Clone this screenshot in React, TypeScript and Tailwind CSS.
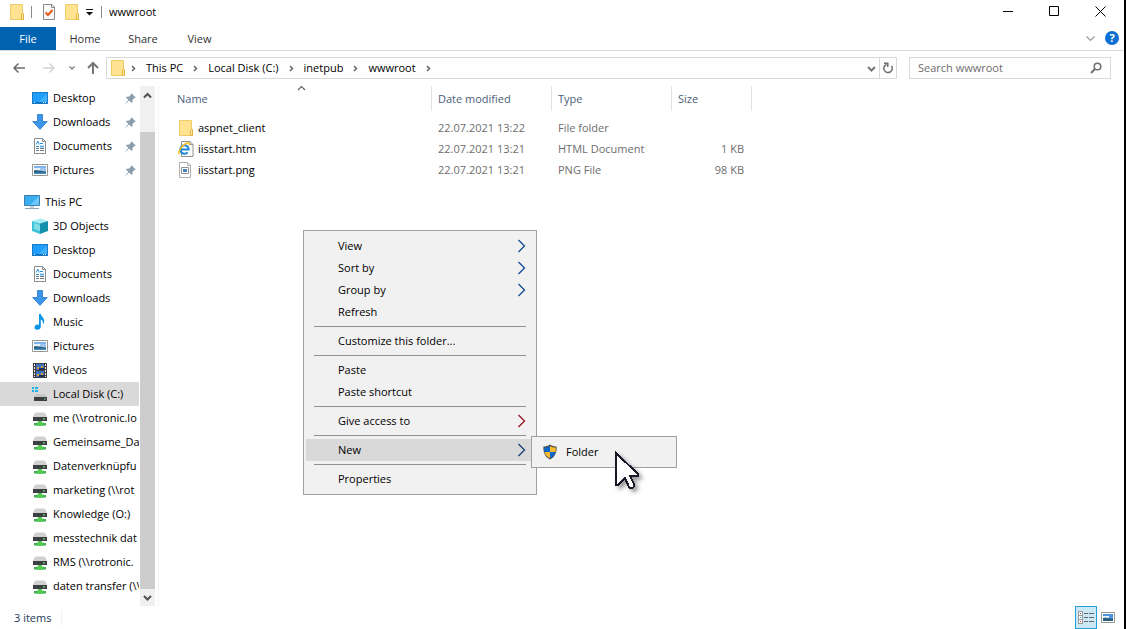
import type { ReactNode } from "react";

type SideItem = { name: string; icon: ReactNode; pinned?: boolean; active?: boolean };
type FileItem = { name: string; date: string; type: string; size: string; icon: ReactNode };
type MenuItem = { label: string; arrow?: string; active?: boolean };

const FolderIcon = () => (
  <svg width="16" height="16" viewBox="0 0 16 16" className="shrink-0">
    <path d="M1.5 0.5h12v11h1v4h-13z" fill="#ffe391" stroke="#eecb66" />
    <path d="M12.500 15.500v-5l1-1h1v6z" fill="#ffe9a8" stroke="#e3b53c" />
  </svg>
);

const DesktopIcon = () => (
  <svg width="16" height="16" viewBox="0 0 16 16" shapeRendering="crispEdges">
    <path d="M0 2h16v12H0z" fill="#1879c4" />
    <path d="M1 3h14v9H1z" fill="#1e9dfb" />
    <path d="M15 3v9H6z" fill="#3eaeff" />
    <path d="M1 12h14v1H1z" fill="#0c6fc0" />
    <path d="M2 12h1v1H2zM11 12h1v1h-1zM13 12h1v1h-1z" fill="#d9efff" />
  </svg>
);

const DownloadsIcon = () => (
  <svg width="16" height="16" viewBox="0 0 16 16">
    <path d="M5.500 0.500h5v7h4.700L8 15.400 0.800 7.500h4.700z" fill="#3d94e4" stroke="#2a7fd0" strokeWidth="0.9" />
  </svg>
);

const DocumentsIcon = () => (
  <svg width="16" height="16" viewBox="0 0 16 16">
    <path d="M2.500 0.500h8l3 3v12h-11z" fill="#fff" stroke="#8b8b8b" />
    <path d="M10.500 0.500v3h3" fill="none" stroke="#8b8b8b" />
    <path d="M4 6.500l2-3.500 1.200 3.500M8 5.500h3M4 8.500h3M8 8.500h4" fill="none" stroke="#2f93dc" />
    <path d="M8 7.500h4v2H8z" fill="#5fb0e8" />
    <path d="M4 10.500h3M8 10.500h4M4 12.500h3M8 12.500h4" fill="none" stroke="#6f7c88" />
  </svg>
);

const PicturesIcon = () => (
  <svg width="16" height="16" viewBox="0 0 16 16">
    <path d="M0.500 2.500h15v11h-15z" fill="#fff" stroke="#979797" />
    <path d="M2 4h12v8H2z" fill="#9fc9f0" />
    <path d="M2 4h12v2H2z" fill="#7db4ea" />
    <path d="M2 6h6v2H2z" fill="#e8f4fb" />
    <path d="M2 8.500c3-1 7 .3 12 1V12H2z" fill="#2d5d7c" />
    <path d="M2 10.500h12V12H2z" fill="#3f8dbd" />
  </svg>
);

const ComputerIcon = () => (
  <svg width="16" height="16" viewBox="0 0 16 16">
    <path d="M0.500 1.500h15v10h-15z" fill="#38adf0" stroke="#3c7fa8" />
    <path d="M15 2v9H6z" fill="#6cc8fa" />
    <path d="M6 12h4v2H6z" fill="#c3d2dc" />
    <path d="M1 14.500h14" stroke="#8fa6b5" />
  </svg>
);

const CubeIcon = () => (
  <svg width="16" height="16" viewBox="0 0 16 16">
    <path d="M0 3l8-2.500L16 3 8 5.500z" fill="#a5eef5" />
    <path d="M0 3l8 2.500V16L0 13z" fill="#3fc2d8" />
    <path d="M16 3L8 5.500V16l8-3z" fill="#1490ab" />
    <path d="M2 5l6 2v6L2 11z" fill="#7fdfe9" />
  </svg>
);

const MusicIcon = () => (
  <svg width="16" height="16" viewBox="0 0 16 16">
    <path d="M7 0h1.800c.2 2.500 4 3.500 3.400 8-.2 1-.8 1.800-1.400 2.200.5-2.700-.5-4-2-4.700V13c0 1.500-1.600 2.700-3.600 2.700S2.500 14.800 2.500 13.300s1.600-2.700 3.200-2.700c.5 0 .9.100 1.300.3z" fill="#0b93e8" />
  </svg>
);

const VideosIcon = () => (
  <svg width="16" height="16" viewBox="0 0 16 16" shapeRendering="crispEdges">
    <path d="M1 1h14v15H1z" fill="#3d3d3d" />
    <path d="M2 2h1v2H2zM2 5h1v2H2zM2 8h1v2H2zM2 11h1v2H2zM2 14h1v1H2zM13 2h1v2h-1zM13 5h1v2h-1zM13 8h1v2h-1zM13 11h1v2h-1zM13 14h1v1h-1z" fill="#eee" />
    <path d="M4 2h8v6H4zM4 9h8v6H4z" fill="#3f74c4" />
    <path d="M5 5h2v2H5zM9 4h2v2H9zM5 12h2v2H5zM9 11h2v2H9z" fill="#d79b2d" />
    <path d="M7 6h5v2H7zM7 13h5v2H7z" fill="#1b2f63" />
  </svg>
);

const DiskIcon = () => (
  <svg width="16" height="16" viewBox="0 0 16 16">
    <path d="M0 1h2v2H0zM3 1h3v2H3zM0 4h2v2H0zM3 4h3v2H3z" fill="#19b5e8" />
    <path d="M4.500 8h8L15 11H2z" fill="#c3c5c7" />
    <path d="M2 11h13v4H2z" fill="#3d4043" />
    <path d="M12 12.500h1.500v1H12z" fill="#7af07a" />
  </svg>
);

const NetDriveIcon = () => (
  <svg width="16" height="16" viewBox="0 0 16 16">
    <path d="M3 2.500h10l2 4.500H1z" fill="#d0d1d3" />
    <path d="M1 7h14v4H1z" fill="#3c3f42" />
    <path d="M11 8.500h2v1h-2z" fill="#86ee86" />
    <path d="M6 11h4v2H6z" fill="#5bc45b" />
    <path d="M2 13h12v2.500H2z" fill="#3fb04a" />
    <path d="M5 12.500h6V16H5z" fill="#55cb57" />
  </svg>
);

const PinIcon = () => (
  <svg width="11" height="11" viewBox="0 0 11 11" className="shrink-0">
    <path d="M6.500 0.300l4.200 4.200-1.200.5-1.800 1.800-.3 2.400-1 .6L4 7.500 0.800 10.500 0.400 10.100 3.400 7 1 4.600l.8-.9 2.400-.3L6 1.500z" fill="#8d9dab" />
  </svg>
);

const HtmIcon = () => (
  <svg width="16" height="16" viewBox="0 0 16 16" className="shrink-0">
    <path d="M3.500 0.500h8.500l3 3v12H3.500z" fill="#fff" stroke="#929292" />
    <path d="M12 0.500v3h3" fill="none" stroke="#929292" />
    <path d="M2.500 8.500h8.200a4.200 4.200 0 1 0-1 2.800" fill="none" stroke="#1a86dc" strokeWidth="2" />
    <path d="M1.500 13.200C-1 10.800 5 3 9.500 2c1.800-.3 2.200.8 1.600 2.200" fill="none" stroke="#f2c11f" strokeWidth="1.500" />
  </svg>
);

const PngIcon = () => (
  <svg width="16" height="16" viewBox="0 0 16 16" className="shrink-0">
    <path d="M1.500 0.500h8.500l2.500 2.500v12.500h-11z" fill="#fff" stroke="#b0b0b0" />
    <path d="M9.500 0.500v3h3" fill="none" stroke="#b0b0b0" />
    <path d="M3.500 5.500h7v6h-7z" fill="#fff" stroke="#8a9299" />
    <path d="M5 7h4v3H5z" fill="#4784bd" />
  </svg>
);

const ShieldIcon = () => (
  <svg width="16" height="16" viewBox="0 0 16 16" className="shrink-0">
    <path d="M8 0.600c2 1.600 4.200 2 6.600 2C15 9 12.500 13.500 8 15.500 3.500 13.500 1 9 1.400 2.600c2.400 0 4.600-.4 6.600-2z" fill="#4b4b4b" />
    <path d="M8 2v6H2.500C2.200 6.700 2.200 5.200 2.300 3.600 4.500 3.500 6.300 3.100 8 2z" fill="#0b67d0" />
    <path d="M8 2v6h5.500c.3-1.300.3-2.800.2-4.400C11.500 3.500 9.700 3.100 8 2z" fill="#fdbb2d" />
    <path d="M8 14.300V8H2.500c.8 3 2.700 5.100 5.500 6.300z" fill="#fdbb2d" />
    <path d="M8 14.300V8h5.500c-.8 3-2.700 5.100-5.500 6.300z" fill="#0b67d0" />
  </svg>
);

const Chevron = ({ dir, className }: { dir: "up" | "down" | "right"; className: string }) => (
  <svg width="9" height="9" viewBox="0 0 9 9" fill="none" stroke="currentColor" strokeWidth="1.200" className={className}>
    {dir === "up" && <path d="M1 6l3.500-3.500L8 6" />}
    {dir === "down" && <path d="M.5 2.500l4 4 4-4" />}
    {dir === "right" && <path d="M3 2l2.500 2.500L3 7" strokeWidth="1.500" />}
  </svg>
);

const quickAccess: SideItem[] = [
  { name: "Desktop", icon: <DesktopIcon />, pinned: true },
  { name: "Downloads", icon: <DownloadsIcon />, pinned: true },
  { name: "Documents", icon: <DocumentsIcon />, pinned: true },
  { name: "Pictures", icon: <PicturesIcon />, pinned: true },
];

const thisPc: SideItem[] = [
  { name: "3D Objects", icon: <CubeIcon /> },
  { name: "Desktop", icon: <DesktopIcon /> },
  { name: "Documents", icon: <DocumentsIcon /> },
  { name: "Downloads", icon: <DownloadsIcon /> },
  { name: "Music", icon: <MusicIcon /> },
  { name: "Pictures", icon: <PicturesIcon /> },
  { name: "Videos", icon: <VideosIcon /> },
  { name: "Local Disk (C:)", icon: <DiskIcon />, active: true },
  { name: "me (\\\\rotronic.lo", icon: <NetDriveIcon /> },
  { name: "Gemeinsame_Da", icon: <NetDriveIcon /> },
  { name: "Datenverknüpfu", icon: <NetDriveIcon /> },
  { name: "marketing (\\\\rot", icon: <NetDriveIcon /> },
  { name: "Knowledge (O:)", icon: <NetDriveIcon /> },
  { name: "messtechnik dat", icon: <NetDriveIcon /> },
  { name: "RMS (\\\\rotronic.", icon: <NetDriveIcon /> },
  { name: "daten transfer (\\\\", icon: <NetDriveIcon /> },
];

const files: FileItem[] = [
  { name: "aspnet_client", date: "22.07.2021 13:22", type: "File folder", size: "", icon: <FolderIcon /> },
  { name: "iisstart.htm", date: "22.07.2021 13:21", type: "HTML Document", size: "1 KB", icon: <HtmIcon /> },
  { name: "iisstart.png", date: "22.07.2021 13:21", type: "PNG File", size: "98 KB", icon: <PngIcon /> },
];

const menuGroups: MenuItem[][] = [
  [
    { label: "View", arrow: "text-[#0f4c94]" },
    { label: "Sort by", arrow: "text-[#0f4c94]" },
    { label: "Group by", arrow: "text-[#0f4c94]" },
    { label: "Refresh" },
  ],
  [{ label: "Customize this folder..." }],
  [{ label: "Paste" }, { label: "Paste shortcut" }],
  [{ label: "Give access to", arrow: "text-[#98101f]" }],
  [{ label: "New", arrow: "text-[#143f72]", active: true }],
  [{ label: "Properties" }],
];

const TitleBar = () => (
  <header className="flex h-[27px] shrink-0 items-start justify-between">
    <div className="flex h-6 items-center pl-[9px]">
      <FolderIcon />
      <span className="ml-1.5 h-3 w-px bg-[#8a8a8a]" />
      <button aria-label="Properties" className="ml-[9px]">
        <svg width="16" height="16" viewBox="0 0 16 16">
          <path d="M2.500 0.500h8.500l2.500 2.500v12.500h-11z" fill="#fafafa" stroke="#8a8a8a" />
          <path d="M10.500 0.500v3h3" fill="none" stroke="#8a8a8a" />
          <path d="M4.500 8.500l2.500 2.500 4.500-5" fill="none" stroke="#e8591c" strokeWidth="2" />
        </svg>
      </button>
      <button aria-label="New folder" className="ml-[7px]">
        <FolderIcon />
      </button>
      <button aria-label="Customize toolbar" className="ml-1.5">
        <svg width="8" height="8" viewBox="0 0 8 8">
          <path d="M0 1h7v1H0zM0 4h7L3.500 7.500z" fill="#111" />
        </svg>
      </button>
      <span className="ml-[7px] h-3 w-px bg-[#8a8a8a]" />
      <h1 className="ml-[7px] text-black">wwwroot</h1>
    </div>
    <div className="flex h-[22px] pr-px">
      <button aria-label="Minimize" className="flex w-[46px] items-center justify-center">
        <svg width="11" height="11" viewBox="0 0 11 11"><path d="M0 5.500h10" stroke="#000" /></svg>
      </button>
      <button aria-label="Maximize" className="flex w-[46px] items-center justify-center">
        <svg width="11" height="11" viewBox="0 0 11 11"><path d="M.5.5h9v9h-9z" fill="none" stroke="#000" /></svg>
      </button>
      <button aria-label="Close" className="flex w-[46px] items-center justify-center">
        <svg width="11" height="11" viewBox="0 0 11 11"><path d="M.5.5l10 10M10.500.5l-10 10" stroke="#000" /></svg>
      </button>
    </div>
  </header>
);

const Ribbon = () => (
  <div className="flex h-6 shrink-0 items-stretch border-b border-[#dadbdc] text-[#333]">
    <button className="w-14 bg-[#0063b1] text-white">File</button>
    <button className="w-[58px]">Home</button>
    <button className="w-[58px]">Share</button>
    <button className="w-[55px]">View</button>
    <div className="ml-auto flex items-center gap-2.5 pr-[5px] pb-px">
      <button aria-label="Expand ribbon">
        <Chevron dir="down" className="text-[#9a9a9a]" />
      </button>
      <button aria-label="Help" className="flex size-3.5 items-center justify-center rounded-full bg-[#0b6fd3] font-bold text-white">
        ?
      </button>
    </div>
  </div>
);

const AddressBar = () => (
  <div className="flex shrink-0 items-center pt-1.5 pr-[13px] pb-[7px] pl-3">
    <button aria-label="Back">
      <svg width="14" height="14" viewBox="0 0 14 14" fill="none" stroke="#6b6b6b" strokeWidth="1.500">
        <path d="M13 7H2M6.500 2.500L2 7l4.500 4.500" />
      </svg>
    </button>
    <button aria-label="Forward" className="ml-4">
      <svg width="14" height="14" viewBox="0 0 14 14" fill="none" stroke="#d5d5d5" strokeWidth="1.500">
        <path d="M1 7h11M7.500 2.500L12 7l-4.500 4.500" />
      </svg>
    </button>
    <button aria-label="Recent locations" className="ml-3">
      <svg width="8" height="8" viewBox="0 0 8 8" fill="none" stroke="#858585" strokeWidth="1.500">
        <path d="M1.500 2.500L4 5l2.500-2.500" />
      </svg>
    </button>
    <button aria-label="Up" className="ml-2.5">
      <svg width="14" height="14" viewBox="0 0 14 14" fill="none" stroke="#757575" strokeWidth="2">
        <path d="M7 13V2M2 7l5-5 5 5" />
      </svg>
    </button>
    <div className="ml-1.5 flex h-[22px] flex-1 items-center border border-[#d9d9d9] pl-[3px]">
      <FolderIcon />
      <Chevron dir="right" className="mr-2 ml-[3px] text-[#666]" />
      {["This PC", "Local Disk (C:)", "inetpub", "wwwroot"].map((part) => (
        <div key={part} className="flex items-center">
          <a href="#" className="text-black">{part}</a>
          <Chevron dir="right" className="mx-2 text-[#666]" />
        </div>
      ))}
      <button aria-label="Previous locations" className="mr-[3px] ml-auto">
        <svg width="9" height="9" viewBox="0 0 9 9" fill="none" stroke="#777" strokeWidth="2">
          <path d="M1 3l3.500 3.500L8 3" />
        </svg>
      </button>
      <button aria-label="Refresh" className="flex h-full w-[17px] items-center justify-center border-l border-[#d9d9d9]">
        <svg width="11" height="12" viewBox="0 0 11 12" fill="none" stroke="#6f6f6f" strokeWidth="1.500">
          <path d="M3.500 2.500a4.200 4.200 0 1 0 5 1.500" />
          <path d="M1 1.200h3.800V5" />
        </svg>
      </button>
    </div>
    <div className="ml-3 flex h-[22px] w-[202px] items-center border border-[#d9d9d9] px-2">
      <input
        type="search"
        aria-label="Search wwwroot"
        placeholder="Search wwwroot"
        className="min-w-0 flex-1 bg-transparent outline-none placeholder:text-[#6d6d6d]"
      />
      <svg width="12" height="12" viewBox="0 0 12 12" fill="none" stroke="#6f6f6f" strokeWidth="1.500">
        <circle cx="7.500" cy="4.500" r="3.300" />
        <path d="M5 7L1 11" strokeWidth="2" />
      </svg>
    </div>
  </div>
);

const SideRow = ({ item }: { item: SideItem }) => (
  <li className={item.active ? "bg-[#d9d9d9]" : ""}>
    <a href="#" className="flex h-6 items-center gap-[5px] pl-8 text-black">
      <span className="shrink-0">{item.icon}</span>
      <span className="whitespace-nowrap">{item.name}</span>
      {item.pinned && (
        <span className="ml-auto pr-[3px]">
          <PinIcon />
        </span>
      )}
    </a>
  </li>
);

const Sidebar = () => (
  <aside className="flex w-[159px] shrink-0 border-r border-[#f3f3f3]">
    <nav className="w-[139px] overflow-hidden">
      <ul>
        {quickAccess.map((item) => (
          <SideRow key={item.name} item={item} />
        ))}
      </ul>
      <a href="#" className="mt-2 flex h-6 items-center gap-[5px] pl-6 text-black">
        <ComputerIcon />
        This PC
      </a>
      <ul>
        {thisPc.map((item) => (
          <SideRow key={item.name} item={item} />
        ))}
      </ul>
    </nav>
    <div className="ml-px flex w-[15px] flex-col items-center bg-[#f0f0f0]">
      <svg width="9" height="46" viewBox="0 0 9 46" fill="none" stroke="#505050" strokeWidth="2" className="shrink-0">
        <path d="M1 11.500L4.500 8 8 11.500" />
      </svg>
      <div className="w-full flex-1 bg-[#cdcdcd]" />
      <svg width="9" height="17" viewBox="0 0 9 17" fill="none" stroke="#505050" strokeWidth="2" className="shrink-0">
        <path d="M1 7l3.500 3.500L8 7" />
      </svg>
    </div>
  </aside>
);

const FileTable = () => (
  <table className="w-[593px] table-fixed border-separate border-spacing-0 text-left text-[#6d6d6d]">
    <colgroup>
      <col className="w-[273px]" />
      <col className="w-[120px]" />
      <col className="w-[120px]" />
      <col className="w-[80px]" />
    </colgroup>
    <thead className="text-[#4c607a]">
      <tr className="h-[25px]">
        <th className="relative border-r border-[#e2e2e2] pl-[18px] font-normal">
          Name
          <Chevron dir="up" className="absolute -top-0.5 left-[138px] text-[#606060]" />
        </th>
        <th className="border-r border-[#e2e2e2] pl-1.5 font-normal">Date modified</th>
        <th className="border-r border-[#e2e2e2] pl-1.5 font-normal">Type</th>
        <th className="border-r border-[#e2e2e2] pl-1.5 font-normal">Size</th>
      </tr>
    </thead>
    <tbody className="before:block before:h-1.5">
      {files.map((file) => (
        <tr key={file.name} className="h-[21px]">
          <td className="pl-[19px]">
            <a href="#" className="flex items-center gap-1 text-black">
              {file.icon}
              {file.name}
            </a>
          </td>
          <td className="pl-1.5">{file.date}</td>
          <td className="pl-1.5">{file.type}</td>
          <td className="pr-2 text-right">{file.size}</td>
        </tr>
      ))}
    </tbody>
  </table>
);

const ContextMenu = () => (
  <div role="menu" className="absolute top-36 left-36 w-[234px] border border-[#a0a0a0] bg-[#f1f1f1] px-0.5 py-1 text-black">
    {menuGroups.map((group, i) => (
      <div key={group[0].label}>
        {i > 0 && <hr className="mx-2 my-[3px] border-[#919191]" />}
        {group.map((item) => (
          <button
            key={item.label}
            role="menuitem"
            className={
              item.active
                ? "flex h-[22px] w-full items-center justify-between bg-[#d9d9d9] pr-2 pl-8 text-left"
                : "flex h-[22px] w-full items-center justify-between pr-2 pl-8 text-left"
            }
          >
            {item.label}
            {item.arrow && (
              <svg width="9" height="14" viewBox="0 0 9 14" fill="none" stroke="currentColor" strokeWidth="1.300" className={item.arrow}>
                <path d="M1.500 1l6 6-6 6" />
              </svg>
            )}
          </button>
        ))}
      </div>
    ))}
  </div>
);

const SubMenu = () => (
  <div role="menu" className="absolute top-[350px] left-[372px] w-[146px] border border-[#a0a0a0] bg-[#f1f1f1] px-0.5 py-1 text-black">
    <button role="menuitem" className="flex h-[22px] w-full items-center gap-2 pl-2 text-left">
      <ShieldIcon />
      Folder
    </button>
  </div>
);

const Cursor = () => (
  <svg width="32" height="42" viewBox="0 0 32 42" className="absolute top-[365px] left-[455px] drop-shadow-[3px_3px_2px_rgba(0,0,0,0.4)]">
    <path
      d="M2 2v32h2l7-7 4 9c2 2 6 1 5-3l-4-8h8v-2z"
      fill="#fff"
      stroke="#1b1726"
      strokeWidth="2"
      shapeRendering="crispEdges"
    />
  </svg>
);

const StatusBar = () => (
  <footer className="flex h-[23px] shrink-0 items-stretch justify-between pr-[9px] text-[#1e395b]">
    <div className="my-1 flex items-center border-r border-[#f0f0f0] pr-2.5 pl-3.5">3 items</div>
    <div className="flex items-stretch gap-1">
      <button aria-label="Details view" className="flex w-[22px] items-center justify-center border border-[#26a0da] bg-[#cbe8f6]">
        <svg width="16" height="14" viewBox="0 0 16 14" shapeRendering="crispEdges">
          <path d="M.5.5h4v4h-4zM.5 4.500h4v4h-4zM.5 8.500h4v4h-4z" fill="#fff" stroke="#9a9a9a" />
          <path d="M6 2h4v1H6zM11 2h5v1h-5zM6 6h4v1H6zM11 6h5v1h-5zM6 10h4v1H6zM11 10h5v1h-5z" fill="#666" />
          <path d="M2 2h1v1H2z" fill="#555" />
          <path d="M2 6h1v1H2z" fill="#2a8fd0" />
          <path d="M2 10h1v1H2z" fill="#c22" />
        </svg>
      </button>
      <button aria-label="Large icons view" className="flex items-center">
        <svg width="14" height="11" viewBox="0 0 14 11">
          <path d="M.5.5h13v10H.5z" fill="#fff" stroke="#979797" />
          <path d="M2 2h10v7H2z" fill="#4e94e0" />
          <path d="M2 4h6v2H2z" fill="#e8f4fb" />
          <path d="M2 6c3-1 6 .3 10 .5V9H2z" fill="#2d5d7c" />
        </svg>
      </button>
    </div>
  </footer>
);

export default function App() {
  return (
    <div className="flex h-screen flex-col overflow-hidden border-r-2 border-black bg-white font-['Open_Sans','Noto_Sans',sans-serif] text-[11px] leading-4">
      <TitleBar />
      <Ribbon />
      <AddressBar />
      <div className="flex min-h-0 flex-1">
        <Sidebar />
        <main className="relative flex-1">
          <FileTable />
          <ContextMenu />
          <SubMenu />
          <Cursor />
        </main>
      </div>
      <StatusBar />
    </div>
  );
}
